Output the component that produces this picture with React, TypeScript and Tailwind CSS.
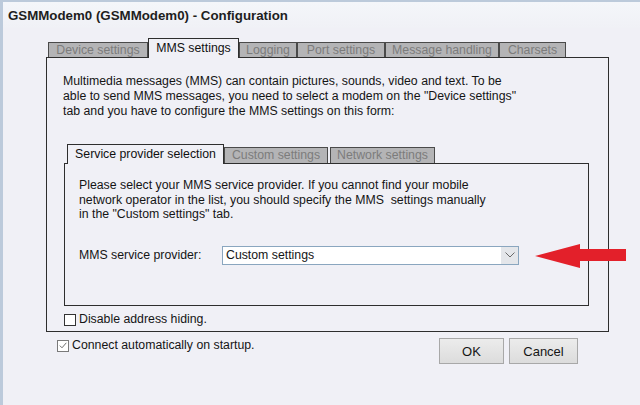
import React from "react";

const Tab = ({ label, w, active, h }: { label: string; w: number; active?: boolean; h: number }) =>
  active ? (
    <div
      className="relative z-10 -mb-px flex items-center justify-center border border-b-0 border-[#2e2e2e] bg-[#f0f0f6] text-[#111]"
      style={{ width: w, height: h + 1 }}
    >
      {label}
    </div>
  ) : (
    <div
      className="flex items-center justify-center border border-b-0 border-[#4a4a4a] bg-[#b4b4b6] text-[#7c7c7c]"
      style={{ width: w, height: h }}
    >
      {label}
    </div>
  );

export default function App() {
  return (
    <div
      className="relative h-[405px] w-[640px] overflow-hidden border-l-[3px] border-t-2 border-[#bccadb] bg-[#f0f0f6] text-[12.3px] leading-[15px] text-[#151515]"
      style={{ fontFamily: '"Liberation Sans", Arial, sans-serif' }}
    >
      {/* title bar */}
      <div className="flex h-[26px] items-center bg-gradient-to-b from-[#f4f6fa] to-[#f0f1f6] pl-[5px] text-[13.3px] font-bold text-[#1e1e1e]">
        GSMModem0 (GSMModem0) - Configuration
      </div>

      <div className="ml-[43px] mt-[10px] w-[563px]">
        {/* outer tabs */}
        <div className="flex h-[19px] items-end pl-[2px]">
          <Tab label="Device settings" w={100} h={15} />
          <Tab label="MMS settings" w={91} h={19} active />
          <Tab label="Logging" w={58} h={15} />
          <Tab label="Port settings" w={88} h={15} />
          <Tab label="Message handling" w={114} h={15} />
          <Tab label="Charsets" w={67} h={15} />
        </div>

        {/* outer panel */}
        <div className="h-[275px] border border-[#2e2e2e] bg-[#f0f0f6] pl-[16px] pt-[16px]">
          <p>
            Multimedia messages (MMS) can contain pictures, sounds, video and text. To be
            <br />
            able to send MMS messages, you need to select a modem on the "Device settings"
            <br />
            tab and you have to configure the MMS settings on this form:
          </p>

          <div className="ml-[4px] mt-[25px] flex h-[19px] items-end">
            <Tab label="Service provider selection" w={157} h={19} active />
            <Tab label="Custom settings" w={104} h={16} />
            <div className="w-[2px]" />
            <Tab label="Network settings" w={105} h={16} />
          </div>

          {/* inner panel */}
          <div className="ml-[1px] h-[143px] w-[525px] border border-[#2e2e2e] pl-[14px] pt-[14px] leading-[14.5px]">
            <p>
              Please select your MMS service provider. If you cannot find your mobile
              <br />
              network operator in the list, you should specify the MMS&nbsp; settings manually
              <br />
              in the "Custom settings" tab.
            </p>
            <div className="mt-[24px] flex items-center">
              <div className="w-[143px]">MMS service provider:</div>
              <div className="flex h-[19px] w-[297px] items-center justify-between border border-[#8aa6bf] bg-white pl-[3px]">
                <span>Custom settings</span>
                <div className="flex h-full w-[17px] items-center justify-center bg-[#e4e6ea]">
                  <svg width="10" height="6" viewBox="0 0 10 6">
                    <path d="M0.5 0.5 L5 5 L9.5 0.5" fill="none" stroke="#6a6a6a" strokeWidth="1" />
                  </svg>
                </div>
              </div>
            </div>
          </div>

          <div className="-ml-[16px] mt-[6px] flex items-center pl-[17px]">
            <div className="h-[12px] w-[12px] border border-[#333] bg-white" />
            <span className="ml-[3px]">Disable address hiding.</span>
          </div>
        </div>

        {/* bottom row */}
        <div className="mt-[6px] flex items-start">
          <div className="ml-[11px] flex items-center">
            <div className="flex h-[12px] w-[12px] items-center justify-center border border-[#7a7a7a] bg-white">
              <svg width="8" height="7" viewBox="0 0 8 7">
                <path d="M0.8 3.6 L3 5.8 L7.3 0.8" fill="none" stroke="#6e6e6e" strokeWidth="1" />
              </svg>
            </div>
            <span className="ml-[3px]">Connect automatically on startup.</span>
          </div>
          <div className="ml-auto mr-[31px] flex gap-[5px]">
            <button className="h-[26px] w-[65px] border border-[#a8a8a8] bg-gradient-to-b from-[#ececec] to-[#dcdcdc] text-[13px]">
              OK
            </button>
            <button className="h-[26px] w-[69px] border border-[#a8a8a8] bg-gradient-to-b from-[#ececec] to-[#dcdcdc] text-[13px]">
              Cancel
            </button>
          </div>
        </div>
      </div>

      {/* red arrow annotation */}
      <svg className="absolute left-[532px] top-[242px]" width="92" height="25" viewBox="0 0 92 25">
        <polygon points="0,12 45,0 45,5 91,5 91,17 45,17 45,24" fill="#e3202a" />
      </svg>
    </div>
  );
}
